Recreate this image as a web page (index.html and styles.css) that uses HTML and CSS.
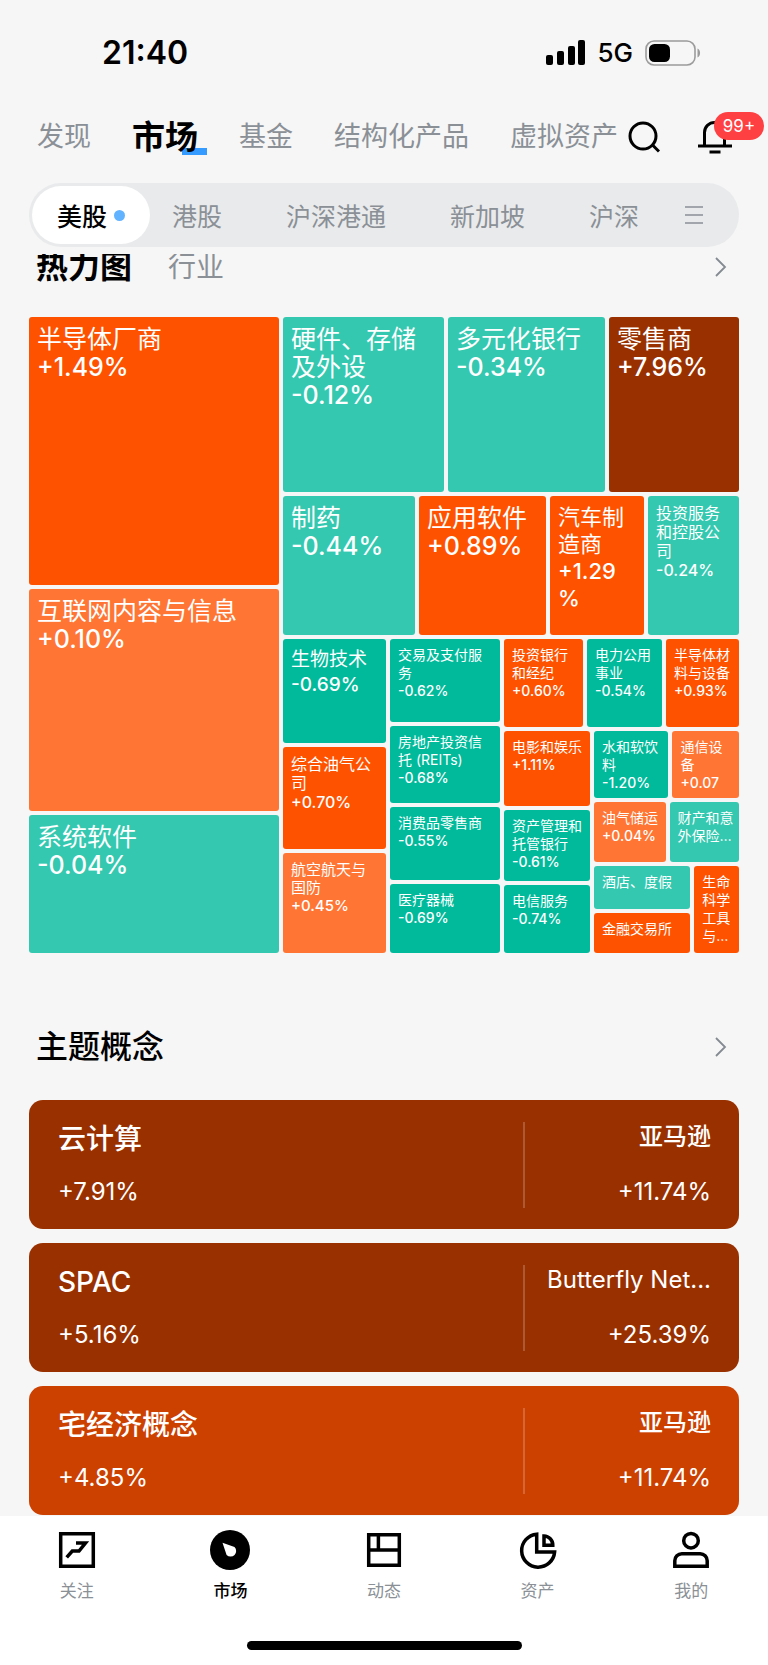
FILE: index.html
```html
<!DOCTYPE html>
<html lang="zh-CN">
<head>
  <meta charset="UTF-8" />
  <meta name="viewport" content="width=device-width, initial-scale=1" />
  <title>市场</title>
  <link rel="stylesheet" href="styles.css">
</head>
<body>

<header class="top">
  <div class="status">
    <span class="time">21:40</span>
    <div class="status-right">
      <svg width="39" height="26" viewBox="0 0 39 26">
        <rect x="0" y="15" width="7" height="10" rx="2"/>
        <rect x="11" y="11" width="7" height="14" rx="2"/>
        <rect x="22" y="6" width="7" height="19" rx="2"/>
        <rect x="32" y="0" width="7" height="25" rx="2"/>
      </svg>
      <span class="net">5G</span>
      <svg width="56" height="26" viewBox="0 0 56 26">
        <rect x="1" y="1" width="49" height="24" rx="8" fill="none" stroke="#9b9b9b" stroke-width="1.6"/>
        <rect x="4" y="4" width="21" height="18" rx="5.5"/>
        <path d="M52.5 8.5c3.4 1.4 3.4 7.6 0 9z" fill="#9b9b9b"/>
      </svg>
    </div>
  </div>

  <div class="nav-row">
    <nav class="nav">
      <a href="#">发现</a>
      <a href="#" class="active"><span>市场</span></a>
      <a href="#">基金</a>
      <a href="#">结构化产品</a>
      <a href="#">虚拟资产</a>
    </nav>
    <div class="actions">
      <button class="icon-btn" aria-label="搜索">
        <svg width="32" height="34" viewBox="0 0 32 34" fill="none" stroke="#000" stroke-width="3">
          <circle cx="15" cy="16" r="13"/>
          <path d="M24 24.500l7 7"/>
        </svg>
      </button>
      <button class="icon-btn bell" aria-label="消息">
        <svg width="34" height="34" viewBox="0 0 34 34" fill="none" stroke="#000" stroke-width="3">
          <path d="M6.500 26V12.500a10 10 0 0 1 10-10a10 10 0 0 1 10 10V26M0 26h34M11.500 32h11"/>
        </svg>
        <span class="badge">99+</span>
      </button>
    </div>
  </div>

  <div class="segment">
    <button class="seg active">美股<i class="dot"></i></button>
    <button class="seg">港股</button>
    <button class="seg">沪深港通</button>
    <button class="seg">新加坡</button>
    <button class="seg">沪深</button>
    <button class="icon-btn menu" aria-label="更多">
      <svg width="18" height="20" viewBox="0 0 18 20" stroke="#8a9096" stroke-width="1.7">
        <path d="M0 2h18M0 10h18M0 18h18"/>
      </svg>
    </button>
  </div>
</header>

<main>
  <section>
    <div class="head head-clip">
      <button class="head-tab active">热力图</button>
      <button class="head-tab">行业</button>
      <a href="#" class="more" aria-label="更多">
        <svg width="12" height="20" viewBox="0 0 12 20" fill="none" stroke="#838a92" stroke-width="1.8"><path d="M1 1l9 9-9 9"/></svg>
      </a>
    </div>

    <!-- flex-grow 为各板块的权重 -->
    <div class="heatmap">
      <div class="col" style="flex-grow:250">
        <div class="tile up2" style="flex-grow:268"><p>半导体厂商<b>+1.49%</b></p></div>
        <div class="tile up1" style="flex-grow:222"><p>互联网内容与信息<b>+0.10%</b></p></div>
        <div class="tile down1" style="flex-grow:138"><p>系统软件<b>-0.04%</b></p></div>
      </div>
      <div class="col" style="flex-grow:456">
        <div class="row" style="flex-grow:175">
          <div class="tile down1" style="flex-grow:161"><p>硬件、存储及外设<b>-0.12%</b></p></div>
          <div class="tile down1" style="flex-grow:157"><p>多元化银行<b>-0.34%</b></p></div>
          <div class="tile up4" style="flex-grow:130"><p>零售商<b>+7.96%</b></p></div>
        </div>
        <div class="row" style="flex-grow:139">
          <div class="tile down1" style="flex-grow:132"><p>制药<b>-0.44%</b></p></div>
          <div class="tile up2" style="flex-grow:127"><p>应用软件<b>+0.89%</b></p></div>
          <div class="tile up2 lg" style="flex-grow:94"><p>汽车制造商<b>+1.29<wbr>%</b></p></div>
          <div class="tile down1 sm" style="flex-grow:91"><p>投资服务和控股公司<b>-0.24%</b></p></div>
        </div>
        <div class="row" style="flex-grow:314">
          <div class="col" style="flex-grow:103">
            <div class="tile down2 md" style="flex-grow:104"><p>生物技术<b>-0.69%</b></p></div>
            <div class="tile up2 sm" style="flex-grow:102"><p>综合油气公司<b>+0.70%</b></p></div>
            <div class="tile up1 s" style="flex-grow:100"><p>航空航天与国防<b>+0.45%</b></p></div>
          </div>
          <div class="col" style="flex-grow:110">
            <div class="tile down2 xs" style="flex-grow:83"><p>交易及支付服务<b>-0.62%</b></p></div>
            <div class="tile down2 xs" style="flex-grow:77"><p>房地产投资信托 (REITs)<b>-0.68%</b></p></div>
            <div class="tile down2 xs" style="flex-grow:73"><p>消费品零售商<b>-0.55%</b></p></div>
            <div class="tile down2 xs" style="flex-grow:69"><p>医疗器械<b>-0.69%</b></p></div>
          </div>
          <div class="col" style="flex-grow:235">
            <div class="row" style="flex-grow:88">
              <div class="tile up2 xs" style="flex-grow:79"><p>投资银行和经纪<b>+0.60%</b></p></div>
              <div class="tile down2 xs" style="flex-grow:75"><p>电力公用事业<b>-0.54%</b></p></div>
              <div class="tile up2 xs" style="flex-grow:73"><p>半导体材料与设备<b>+0.93%</b></p></div>
            </div>
            <div class="row" style="flex-grow:222">
              <div class="col" style="flex-grow:86">
                <div class="tile up2 xs" style="flex-grow:75"><p>电影和娱乐<b>+1.11%</b></p></div>
                <div class="tile down2 xs" style="flex-grow:71"><p>资产管理和托管银行<b>-0.61%</b></p></div>
                <div class="tile down2 xs" style="flex-grow:68"><p>电信服务<b>-0.74%</b></p></div>
              </div>
              <div class="col" style="flex-grow:145">
                <div class="row" style="flex-grow:67">
                  <div class="tile down2 xs" style="flex-grow:75"><p>水和软饮料<b>-1.20%</b></p></div>
                  <div class="tile up1 xs" style="flex-grow:67"><p>通信设备<b>+0.07</b></p></div>
                </div>
                <div class="row" style="flex-grow:60">
                  <div class="tile up1 xs" style="flex-grow:72"><p>油气储运<b>+0.04%</b></p></div>
                  <div class="tile down1 xs" style="flex-grow:70"><p>财产和意外保险…</p></div>
                </div>
                <div class="row" style="flex-grow:87">
                  <div class="col" style="flex-grow:97">
                    <div class="tile down1 xs" style="flex-grow:43"><p>酒店、度假</p></div>
                    <div class="tile up2 xs" style="flex-grow:40"><p>金融交易所</p></div>
                  </div>
                  <div class="tile up2 xs" style="flex-grow:45"><p>生命科学工具与…</p></div>
                </div>
              </div>
            </div>
          </div>
        </div>
      </div>
    </div>
  </section>

  <section class="themes">
    <div class="head">
      <h2>主题概念</h2>
      <a href="#" class="more" aria-label="更多">
        <svg width="12" height="20" viewBox="0 0 12 20" fill="none" stroke="#838a92" stroke-width="1.8"><path d="M1 1l9 9-9 9"/></svg>
      </a>
    </div>
    <div class="cards">
      <a href="#" class="card up4">
        <div class="theme"><h3>云计算</h3><span class="pct">+7.91%</span></div>
        <div class="leader"><span class="name">亚马逊</span><span class="pct">+11.74%</span></div>
      </a>
      <a href="#" class="card up4">
        <div class="theme"><h3>SPAC</h3><span class="pct">+5.16%</span></div>
        <div class="leader"><span class="name en">Butterfly Net...</span><span class="pct">+25.39%</span></div>
      </a>
      <a href="#" class="card up3">
        <div class="theme"><h3>宅经济概念</h3><span class="pct">+4.85%</span></div>
        <div class="leader"><span class="name">亚马逊</span><span class="pct">+11.74%</span></div>
      </a>
    </div>
  </section>
</main>

<footer class="bottom">
  <nav class="tabbar">
    <a href="#">
      <svg viewBox="0 0 40 40"><path d="M3.700 3.700h32.600v32.600H3.700z"/><path d="M9.700 27.300l5.600-6.300H22l6.500-8H19" /></svg>
      关注
    </a>
    <a href="#" class="active">
      <svg viewBox="0 0 40 40"><circle cx="20" cy="20" r="20" fill="#000" stroke="none"/><path d="M12.500 12.700L24.500 17A5.600 5.600 0 1 1 16.600 25z" fill="#fff" stroke="none"/></svg>
      市场
    </a>
    <a href="#">
      <svg viewBox="0 0 40 40"><path d="M4.700 4.700h30.600v30.600H4.700zM4.700 20h30.600M14.400 4.700V20"/></svg>
      动态
    </a>
    <a href="#">
      <svg viewBox="0 0 40 40"><path d="M18.700 4.200V22H36.600A16.500 16.500 0 1 1 18.700 4.200z"/><path d="M26 6v9.200h8.800A9 9 0 0 0 26 6z"/></svg>
      资产
    </a>
    <a href="#">
      <svg viewBox="0 0 40 40"><circle cx="20" cy="10.700" r="7.300"/><path d="M3.800 36.200v-5.400a7 7 0 0 1 7-7h18.400a7 7 0 0 1 7 7v5.400z"/></svg>
      我的
    </a>
  </nav>
  <div class="home-bar"></div>
</footer>

</body>
</html>
```

FILE: styles.css
```css
* {
  box-sizing: border-box;
}
body {
  margin: 0;
  background: #f6f6f6;
  color: #000;
  font-family: Inter, "Noto Sans CJK SC", sans-serif;
}
a {
  color: inherit;
  text-decoration: none;
}
button {
  background: none;
  border: none;
  padding: 0;
  margin: 0;
  color: inherit;
  font: inherit;
  cursor: pointer;
}
svg {
  display: block;
}
h2, h3, p {
  margin: 0;
}

/* status */
.status {
  display: flex;
  justify-content: space-between;
  align-items: center;
  height: 105px;
  padding: 0 67px 0 102px;
}
.time {
  font-size: 32px;
  font-weight: 600;
}
.status-right {
  display: flex;
  align-items: center;
  gap: 12px;
}
.net {
  font-size: 26px;
  font-weight: 500;
}

/* nav */
.nav-row {
  display: flex;
  justify-content: space-between;
  align-items: center;
  height: 64px;
  padding: 0 36px 0 37px;
}
.nav {
  display: flex;
  align-items: center;
  gap: 41px;
  font-size: 27px;
  line-height: 40px;
  color: #8a9096;
  white-space: nowrap;
}
.nav .active {
  position: relative;
  font-size: 33px;
  font-weight: 700;
  color: #000;
}
.nav .active::before {
  content: "";
  position: absolute;
  right: -9px;
  bottom: 2px;
  width: 25px;
  height: 7px;
  background: #359bff;
}
.nav .active span {
  position: relative;
}
.actions {
  display: flex;
  align-items: center;
  gap: 38px;
}
.bell {
  position: relative;
}
.badge {
  position: absolute;
  left: 16px;
  top: -8px;
  width: 50px;
  border-radius: 14px;
  background: #ff4042;
  color: #fff;
  font-size: 17px;
  line-height: 28px;
}

/* segment */
.segment {
  display: flex;
  align-items: center;
  gap: 64px;
  height: 64px;
  margin: 14px 29px 0;
  padding: 3px 35px 3px 3px;
  border-radius: 32px;
  background: #e9eaec;
  color: #8a9096;
  font-size: 25px;
  white-space: nowrap;
}
.seg.active {
  display: flex;
  align-items: center;
  gap: 7px;
  height: 100%;
  margin-right: -42px;
  padding: 0 25px;
  border-radius: 29px;
  background: #fff;
  color: #000;
  font-weight: 500;
}
.dot {
  width: 11px;
  height: 11px;
  border-radius: 50%;
  background: #62b3ff;
}
.menu {
  margin-left: -18px;
}
.top {
  padding-bottom: 7px;
}

/* sections */
main {
  overflow: hidden;
  padding: 0 29px 1px;
}
.head {
  display: flex;
  align-items: center;
  height: 32px;
  padding: 0 12px 0 7px;
}
.head h2, .head-tab.active {
  font-size: 32px;
  line-height: 32px;
  font-weight: 500;
  color: #000;
}
/* 滚动后标题的上边缘被顶部栏盖住一点 */
.head-clip {
  margin-top: -3px;
}
.head-tab {
  font-size: 28px;
  line-height: 32px;
  color: #8a9096;
}
.head-tab.active {
  margin-right: 36px;
  font-weight: 700;
}
.more {
  margin-left: auto;
}

/* heatmap */
.heatmap {
  display: flex;
  gap: 4px;
  margin-top: 34px;
  aspect-ratio: 710 / 636;
}
.row, .col {
  display: flex;
  flex: 1 1 0;
  gap: 4px;
  min-width: 0;
  min-height: 0;
}
.col {
  flex-direction: column;
}
.tile {
  flex: 1 1 0;
  min-width: 0;
  min-height: 0;
  overflow: hidden;
  border-radius: 3px;
  color: #fff;
  font-size: 25px;
  line-height: 28px;
  word-break: break-all;
}
.tile p {
  padding: 8px 10px 0 8px;
}
.tile b {
  display: block;
  font-weight: 500;
}
.tile.lg {
  font-size: 22px;
  line-height: 27px;
}
.tile.md {
  font-size: 19px;
  line-height: 25px;
}
.tile.sm {
  font-size: 16px;
  line-height: 19px;
}
.tile.s {
  font-size: 15px;
  line-height: 18px;
}
.tile.xs {
  font-size: 14px;
  line-height: 18px;
}
.tile.xs p {
  padding: 7px 5px 0 8px;
}
.up1 { background: #ff7533; }
.up2 { background: #ff5200; }
.up3 { background: #cc4000; }
.up4 { background: #993000; }
.down1 { background: #33c8af; }
.down2 { background: #00ba9b; }

/* themes */
.themes {
  margin-top: 78px;
}
.cards {
  display: flex;
  flex-direction: column;
  gap: 14px;
  margin-top: 37px;
}
.card {
  display: flex;
  padding: 22px 28px 21px 29px;
  border-radius: 14px;
  color: #fff;
}
.theme, .leader {
  display: flex;
  flex-direction: column;
  justify-content: space-between;
  height: 86px;
}
.theme {
  flex: 1;
}
.leader {
  width: 188px;
  border-left: 2px solid rgba(255, 255, 255, 0.2);
  text-align: right;
}
.card h3 {
  font-size: 28px;
  line-height: 34px;
  font-weight: 500;
}
.name {
  font-size: 24px;
  line-height: 30px;
  font-weight: 500;
  white-space: nowrap;
}
.name.en {
  font-weight: 400;
}
.pct {
  font-size: 24px;
  line-height: 32px;
}

/* bottom */
.bottom {
  background: #fff;
  padding: 14px 0 15px;
}
.tabbar {
  display: flex;
}
.tabbar a {
  flex: 1;
  display: flex;
  flex-direction: column;
  align-items: center;
  gap: 9px;
  color: #8a9096;
  font-size: 17px;
  line-height: 24px;
}
.tabbar .active {
  color: #000;
  font-weight: 500;
}
.tabbar svg {
  width: 40px;
  height: 40px;
  fill: none;
  stroke: #000;
  stroke-width: 3.5;
}
.home-bar {
  width: 275px;
  height: 9px;
  margin: 38px auto 0;
  border-radius: 5px;
  background: #000;
}
```
